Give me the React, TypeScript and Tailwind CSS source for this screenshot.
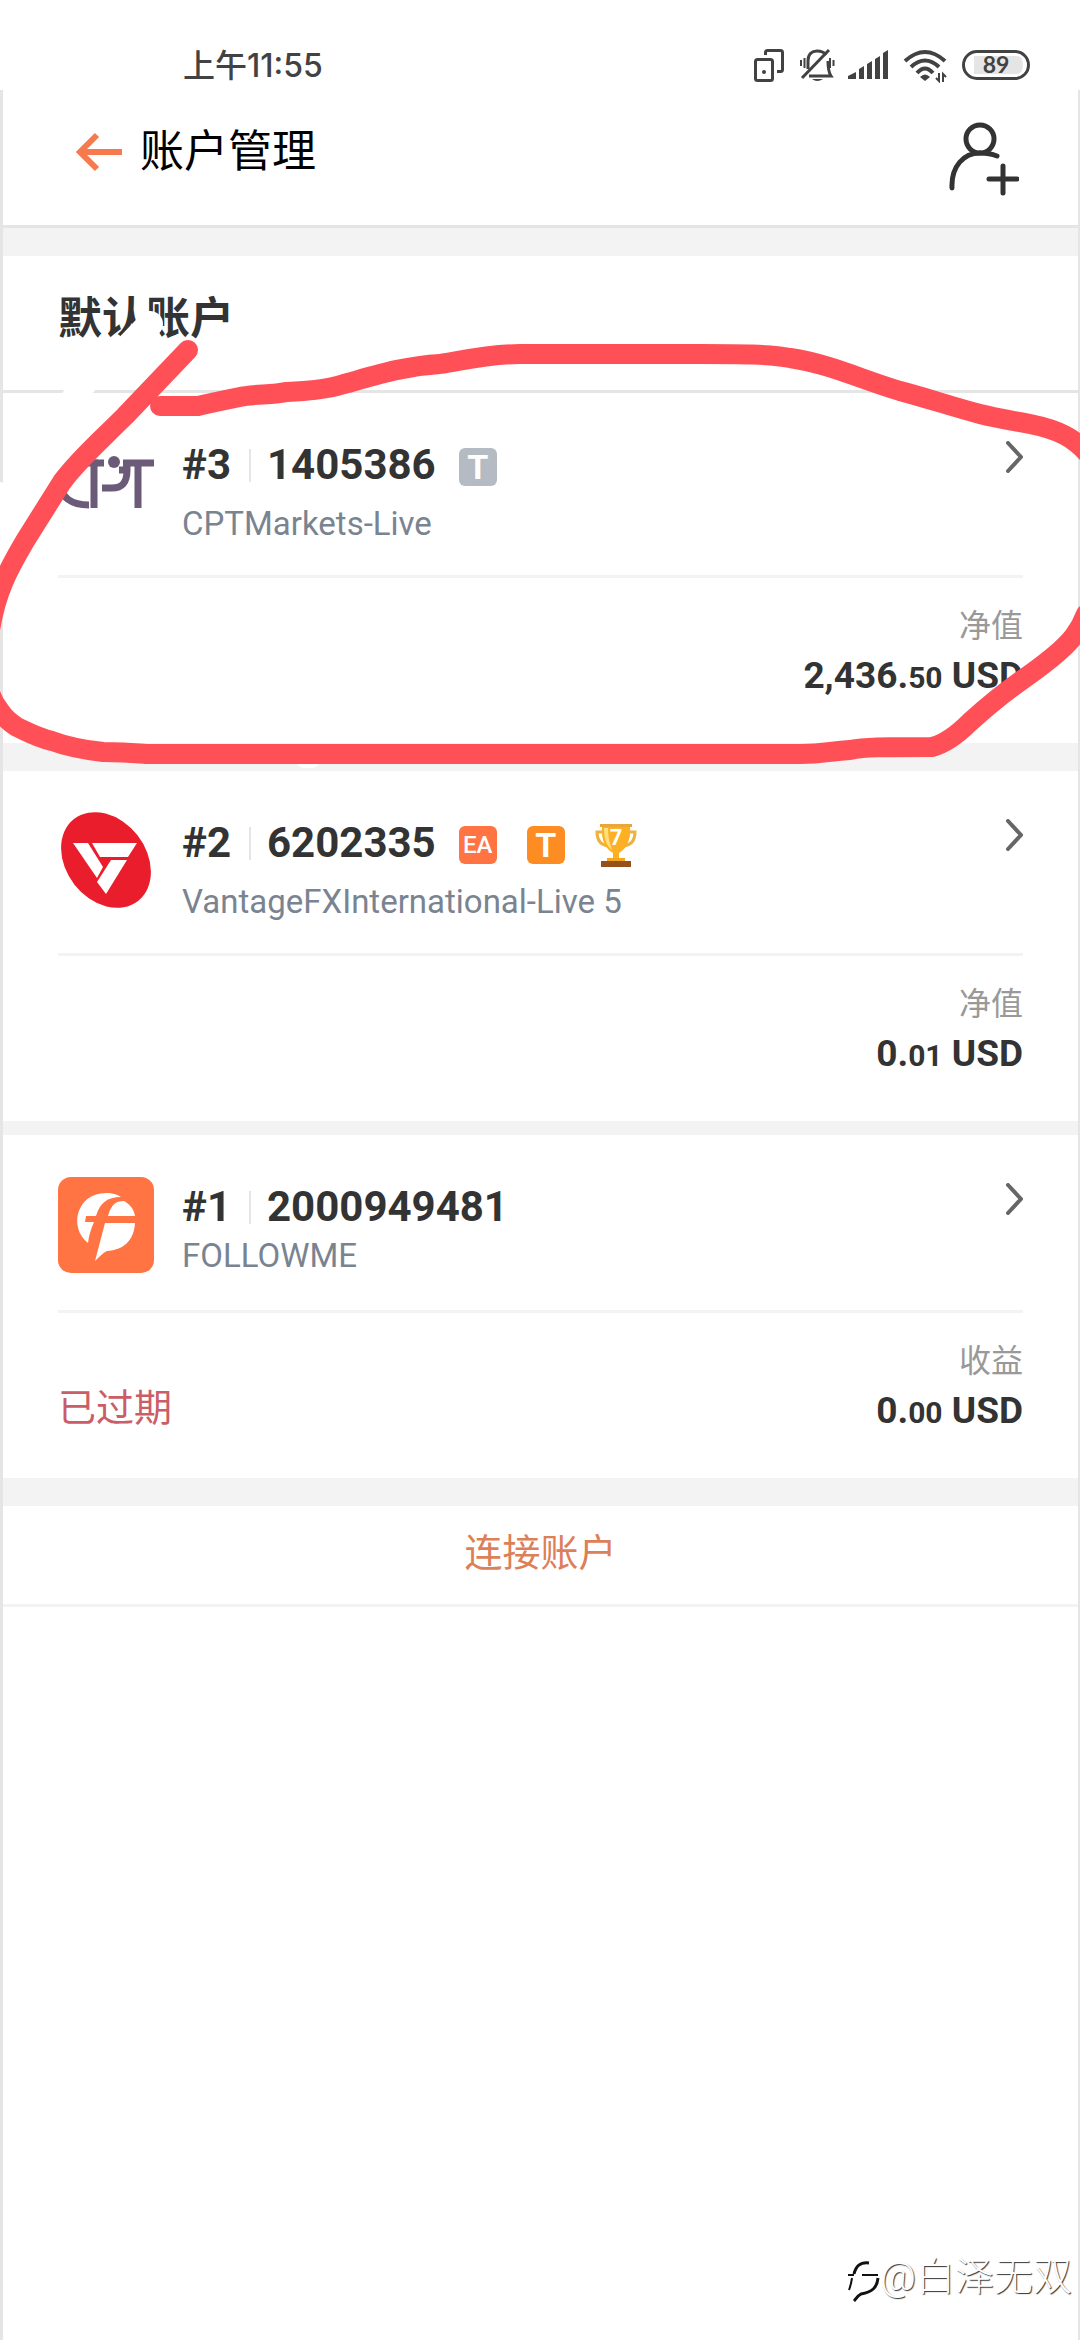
import React from 'react';

type Badge = 'T-gray' | 'EA' | 'T' | 'trophy';

interface Account {
  rank: string;
  id: string;
  server: string;
  logo: React.ReactNode;
  badges: Badge[];
  label: string;
  whole: string;
  cents: string;
  expired?: boolean;
  compact?: boolean;
}

const CptLogo = () => (
  <svg viewBox="0 0 96 96" className="h-24 w-24" fill="none" stroke="#6b5a78" strokeWidth="7">
    <path d="M40 28H28C12 28 3 38 3 50C3 62 13 70 31 70" />
    <path d="M36 73V28H46M44 53H54C65 53 69 47 69 35H61M65 28H96M80 28V73" />
    <circle cx="56" cy="27" r="6" fill="#6b5a78" stroke="none" />
  </svg>
);

const VantageLogo = () => (
  <svg viewBox="0 0 96 96" className="h-24 w-24 overflow-visible">
    <ellipse cx="48" cy="47" rx="52" ry="40" transform="rotate(52 48 47)" fill="#ea1d2c" />
    <path d="M15 30H30L45 54L39 65Z" fill="#fff" />
    <path d="M34 30H79L70 44H42Z" fill="#fff" />
    <path d="M53 47H69L48 81L39 69Z" fill="#fff" />
  </svg>
);

const FollowmeLogo = () => (
  <svg viewBox="0 0 96 96" className="h-24 w-24">
    <rect width="96" height="96" rx="13" fill="#ff7442" />
    <path
      d="M30 66C10 50 19 16 48 16C55 16 60 18 63 20C49 20 42 26 38 39H28L27 45H36C33 52 31 58 30 66Z"
      fill="#fff"
    />
    <path d="M50 39C53 28 57 24 66 24C73 28 76 33 77 39Z" fill="#fff" />
    <path d="M47 46H77C76 64 65 73 49 74C45 76 41 80 37 84Z" fill="#fff" />
  </svg>
);

const Trophy = () => (
  <svg viewBox="0 0 42 44" className="h-11 w-[42px]">
    <path d="M8 9H2C2 18 6 22 13 23M34 9H40C40 18 36 22 29 23" fill="none" stroke="#eeb23c" strokeWidth="3" />
    <path d="M5 1H37V4H35C36 18 31 26 24 30V35H18V30C11 26 6 18 7 4H5Z" fill="#fdb024" />
    <path d="M5 1H37V4H5Z" fill="#e9a73a" />
    <path d="M9 5C9 17 12 23 17 27C14 19 13 12 13 5Z" fill="#ffe07a" />
    <path d="M12 35H30V39H12Z" fill="#f5a81c" />
    <path d="M6 38H36V44H6Z" fill="#95501c" />
    <text x="21" y="22" textAnchor="middle" fontSize="22" fontWeight="700" fill="#fff" className="font-['Roboto',sans-serif]">
      7
    </text>
  </svg>
);

const BadgeIcon = ({ kind }: { kind: Badge }) => {
  if (kind === 'trophy') return <Trophy />;
  if (kind === 'EA') {
    return (
      <span className="flex h-[38px] w-[38px] items-center justify-center rounded-md bg-[#ff7442] text-2xl font-medium text-white">
        EA
      </span>
    );
  }
  return (
    <span
      className={`flex h-[38px] w-[38px] items-center justify-center rounded-md text-[34px] font-bold text-white ${
        kind === 'T' ? 'bg-[#fd8d22]' : 'bg-[#b4bbc3]'
      }`}
    >
      T
    </span>
  );
};

const accounts: Account[] = [
  {
    rank: '#3',
    id: '1405386',
    server: 'CPTMarkets-Live',
    logo: <CptLogo />,
    badges: ['T-gray'],
    label: '净值',
    whole: '2,436.',
    cents: '50',
  },
  {
    rank: '#2',
    id: '6202335',
    server: 'VantageFXInternational-Live 5',
    logo: <VantageLogo />,
    badges: ['EA', 'T', 'trophy'],
    label: '净值',
    whole: '0.',
    cents: '01',
  },
  {
    rank: '#1',
    id: '2000949481',
    server: 'FOLLOWME',
    logo: <FollowmeLogo />,
    badges: [],
    label: '收益',
    whole: '0.',
    cents: '00',
    expired: true,
    compact: true,
  },
];

const AccountCard = ({ account }: { account: Account }) => (
  <article className="px-[55px]">
    <div
      className={`flex items-start border-b-3 border-[#f3f3f3] pt-[42px] ${account.compact ? 'h-[178px]' : 'h-[185px]'}`}
    >
      {account.logo}
      <div className="ml-7 flex-1 pt-[3px]">
        <div className="flex h-[54px] items-center">
          <h2 className="flex items-center text-[42px] leading-[54px] font-bold text-[#333]">
            <span className="w-[67px]">{account.rank}</span>
            <span className="mr-4 h-[33px] w-0.5 bg-[#e5e5e5]" />
            {account.id}
          </h2>
          <div className="ml-[23px] flex items-center gap-[30px] pt-1">
            {account.badges.map((badge) => (
              <BadgeIcon key={badge} kind={badge} />
            ))}
          </div>
        </div>
        <p className={`text-[33px] leading-10 text-[#7a8491] ${account.compact ? 'mt-0.5' : 'mt-3'}`}>{account.server}</p>
      </div>
      <button type="button" aria-label={`${account.rank} ${account.id}`} className="mt-1.5">
        <svg viewBox="0 0 18 32" className="h-8 w-[18px]" fill="none" stroke="#666" strokeWidth="4" strokeLinecap="round">
          <path d="M3 2L16 16L3 30" />
        </svg>
      </button>
    </div>
    <div className="flex h-[165px] items-start justify-between pt-6">
      <p className="pt-11 text-[38px] leading-[54px] text-[#cb5d68]">{account.expired && '已过期'}</p>
      <div className="text-right">
        <p className="text-[32px] leading-[48px] text-[#999]">{account.label}</p>
        <p className="text-[37px] leading-[52px] font-bold text-[#333]">
          {account.whole}
          <span className="text-[30px]">{account.cents}</span> USD
        </p>
      </div>
    </div>
  </article>
);

const StatusBar = () => (
  <div className="flex h-[90px] items-center justify-between pt-[42px] pr-[50px] pl-[183px] text-[#424242]">
    <time className="font-['Inter','Noto_Sans_CJK_SC',sans-serif] text-[32px] leading-[48px] font-medium">上午11:55</time>
    <svg viewBox="0 0 276 34" className="h-[34px] w-[276px]" fill="none" stroke="currentColor" strokeWidth="3">
      <rect x="1.5" y="10.5" width="17" height="21" rx="2" />
      <path d="M11.5 6V3.5Q11.5 1.5 13.5 1.5H26.5Q28.5 1.5 28.5 3.5V20.5Q28.5 22.5 26.5 22.5H23" />
      <circle cx="10" cy="23" r="2" fill="currentColor" stroke="none" />
      <path d="M54 20V12C54 5 58 2 63 2C67 2 70 3 72 6M74 12C74 20 75 24 77 27H55" />
      <path d="M48 29L75 1" />
      <path d="M58 30H69Q63 34 58 30Z" fill="currentColor" stroke="none" />
      <path d="M47 11V17M50.5 9V19M76 9V19M79.5 11V17" strokeWidth="2" />
      <path
        d="M94 30V27L102 23V30ZM105 20L110 17V30H105ZM113 15L118 12V30H113ZM121 10L126 7V30H121ZM129 4L134 1V30H129Z"
        fill="currentColor"
        stroke="none"
      />
      <path d="M151 12Q171 -6 191 12M157 18Q171 5 185 18M163 24Q171 15 179 24" strokeWidth="4" />
      <path d="M166 28Q171 23 176 28L171 32Z" fill="currentColor" stroke="none" />
      <path d="M185 24V32L182 29M189 33V25L192 28" strokeWidth="2" />
      <rect x="209.5" y="2.5" width="65" height="27" rx="13.5" />
      <path d="M220 7H262Q269 7 269 16T262 25H220Z" fill="#e5e5e5" stroke="none" />
      <text
        x="242"
        y="24"
        textAnchor="middle"
        fontSize="23"
        fontWeight="700"
        fill="currentColor"
        stroke="none"
        className="font-['Lato',sans-serif]"
      >
        89
      </text>
    </svg>
  </div>
);

// Hand-drawn marker loop around the default account, with the eraser strokes under it
const MarkerLoop = () => (
  <svg viewBox="0 0 1080 780" className="pointer-events-none absolute top-0 left-0 w-full" fill="none">
    <g stroke="#fff" strokeLinecap="round">
      <path d="M142 296V318" strokeWidth="13" strokeLinecap="butt" />
      <path d="M150 324L126 349" strokeWidth="26" />
      <path d="M86 384L72 398" strokeWidth="22" />
      <path d="M0 488V560" strokeWidth="12" />
      <path d="M304 760H312" strokeWidth="16" />
    </g>
    <path
      d="M188 350L125 416C100 441 78 460 62 482C47 506 35 525 25 541C8 570 -4 592 -10 630C-16 665 -16 692 0 711C6 720 11 723 17 727C28 732 36 737 52 741C68 747 85 750 103 752C125 752 135 753 148 754H800C825 754 830 751 850 750C865 747 880 747 932 747C944 744 955 737 970 722C990 704 1005 692 1022 680C1045 664 1065 648 1074 636C1080 628 1083 622 1086 614M1090 456C1074 438 1060 430 1030 424C1010 420 1000 419 980 414C950 406 930 399 900 391C860 379 830 364 790 358C770 354 740 354 700 354H520C490 354 465 360 440 364C405 366 380 374 344 384C325 390 305 391 286 392C275 395 250 394 240 397C225 400 215 402 198 406H160"
      stroke="#ff5058"
      strokeWidth="20"
      strokeLinecap="round"
      strokeLinejoin="round"
    />
  </svg>
);

const Watermark = () => (
  <footer className="flex items-center justify-end pr-1.5 pb-9 text-[39px] leading-[54px] font-light text-white">
    <svg viewBox="0 0 36 42" className="mt-2 h-[42px] w-9" fill="none" stroke="#111" strokeWidth="2">
      <path d="M4 15H10M18 15H34M8 18Q7 25 5 30" />
      <path d="M10 14C12 6 16 2 25 3M34 18C33 28 28 32 17 34C13 36 12 39 10 41" strokeWidth="3" />
    </svg>
    <span className="[text-shadow:1px_1px_1px_#333]">@白泽无双</span>
  </footer>
);

export default function App() {
  return (
    <div className="relative flex min-h-screen flex-col overflow-hidden bg-white font-['Roboto','Noto_Sans_CJK_SC',sans-serif]">
      <StatusBar />
      <div className="flex flex-1 flex-col border-r-2 border-l-3 border-[#e5e5e5]">
        <header className="flex h-[138px] items-start justify-between border-b-3 border-[#e5e5e5] pr-[59px] pl-[73px]">
          <div className="flex items-center gap-[18px] pt-[29px]">
            <button type="button" aria-label="返回">
              <svg viewBox="0 0 46 40" className="h-10 w-[46px]" fill="none" stroke="#f67a4e" strokeWidth="6">
                <path d="M46 20H5M21 3L4 20L21 37" />
              </svg>
            </button>
            <h1 className="text-[44px] leading-[66px] text-black">账户管理</h1>
          </div>
          <button type="button" aria-label="添加账户" className="mt-8">
            <svg viewBox="0 0 70 74" className="h-[74px] w-[70px]" fill="none" stroke="#333" strokeWidth="5" strokeLinecap="round">
              <circle cx="31" cy="17" r="14" />
              <path d="M3 66C2 44 15 31 31 31C38 31 43 32 48 34M40 57H68M54 44V71" />
            </svg>
          </button>
        </header>
        <main>
          <div className="h-7 bg-[#f3f3f3]" />
          <h2 className="h-[137px] border-b-3 border-[#e5e5e5] px-[55px] pt-[31px] text-[44px] leading-[64px] font-bold text-[#333]">
            默认账户
          </h2>
          <AccountCard account={accounts[0]} />
          <div className="h-7 bg-[#f3f3f3]" />
          <AccountCard account={accounts[1]} />
          <div className="h-3.5 bg-[#f3f3f3]" />
          <AccountCard account={accounts[2]} />
          <div className="h-7 bg-[#f3f3f3]" />
          <button type="button" className="block h-[101px] w-full border-b-3 border-[#f3f3f3] pb-1 text-[38px] text-[#dd7f58]">
            连接账户
          </button>
        </main>
        <div className="flex-1" />
        <Watermark />
      </div>
      <MarkerLoop />
    </div>
  );
}
